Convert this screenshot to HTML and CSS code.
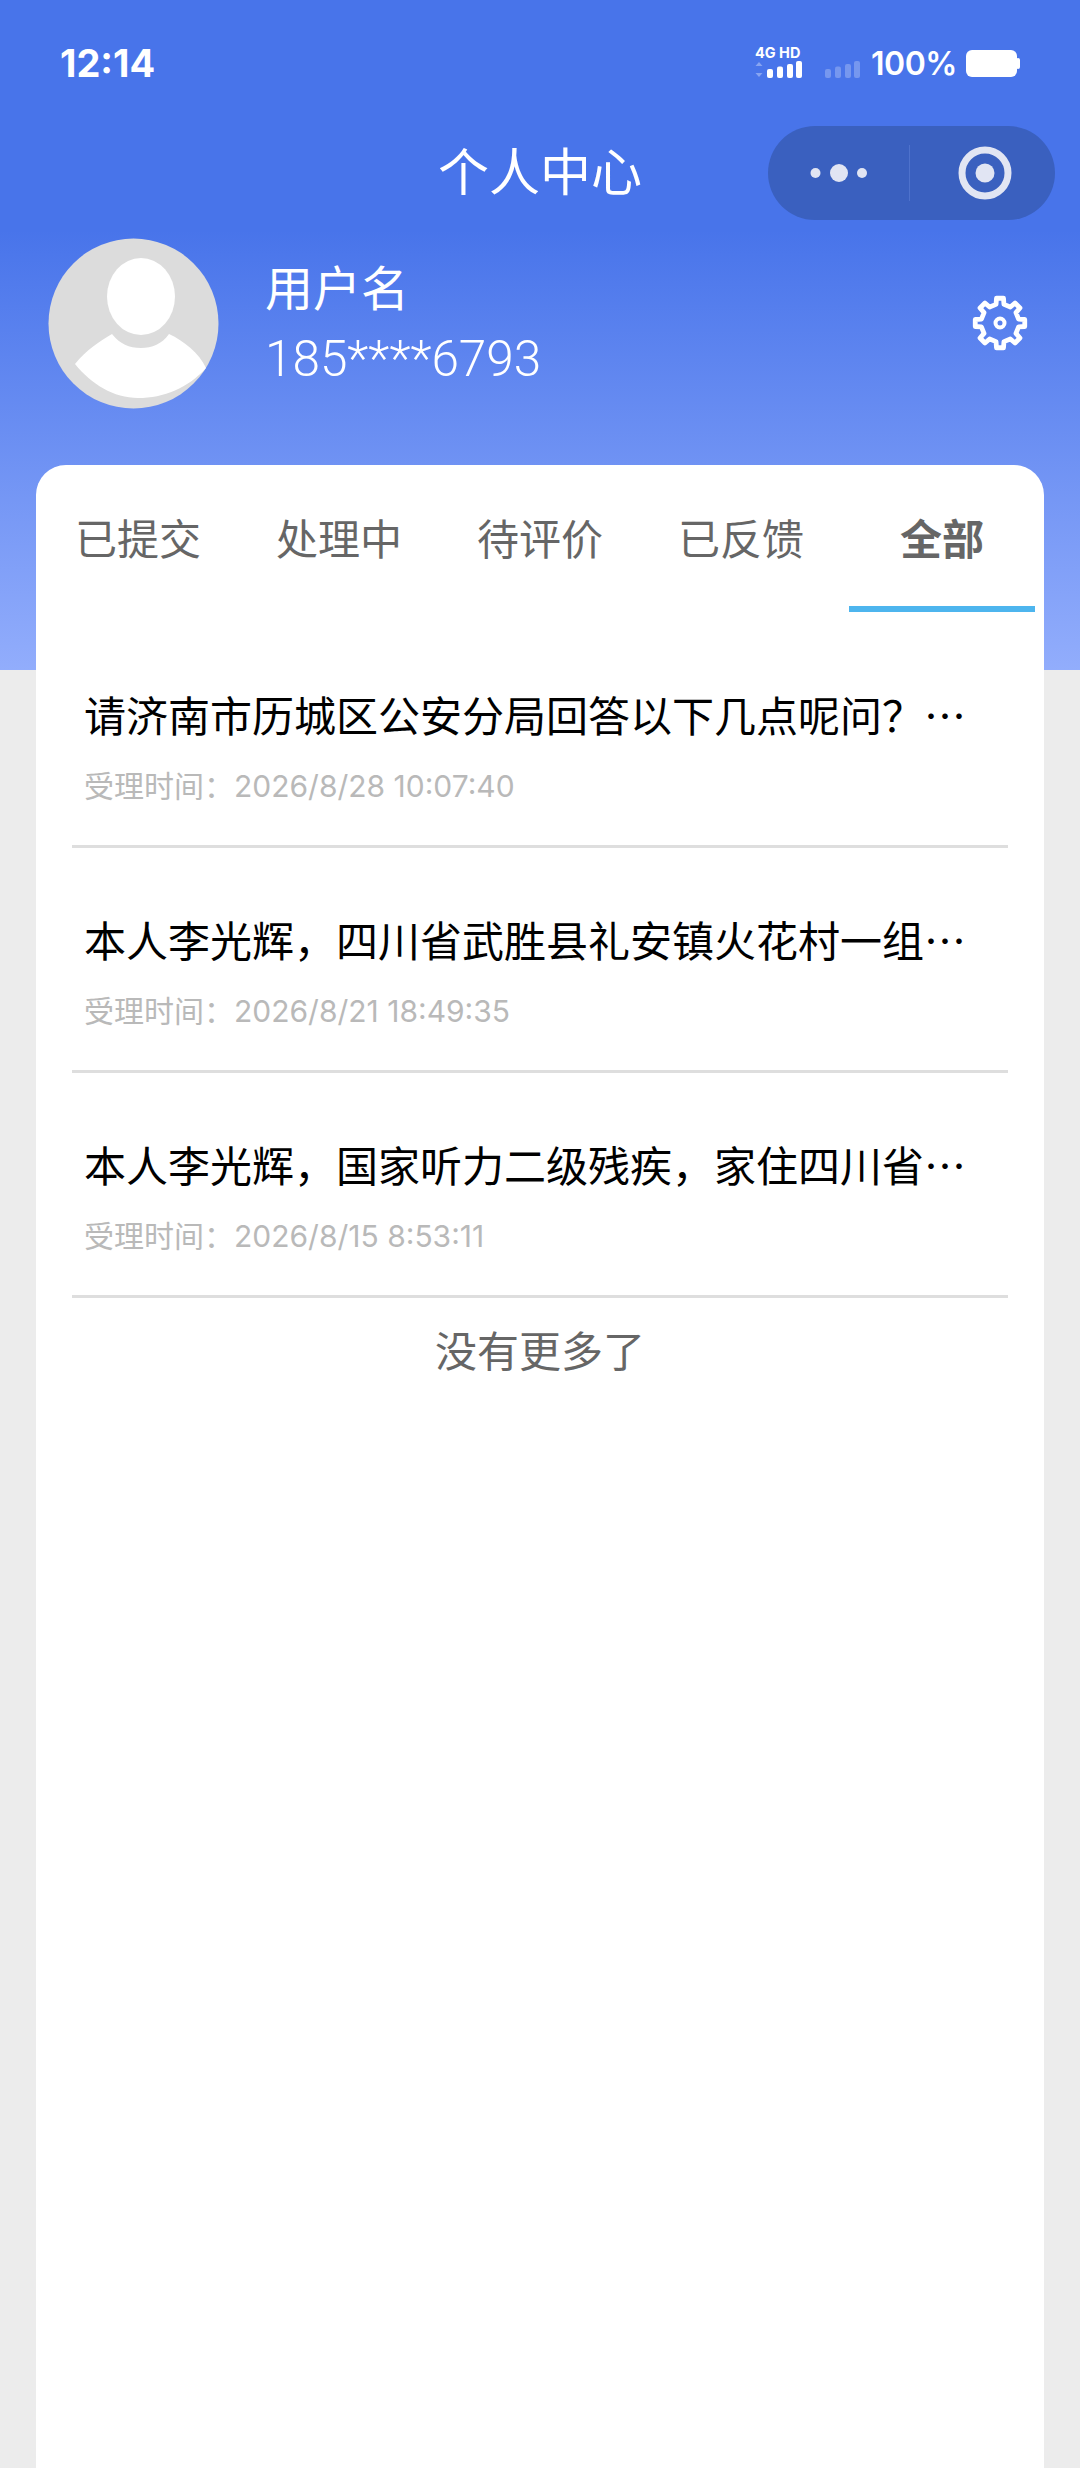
FILE: index.html
```html
<!DOCTYPE html>
<html lang="zh-CN">
<head>
    <meta charset="UTF-8">
    <meta name="viewport" content="width=device-width, initial-scale=1.0">
    <title>个人中心</title>
    <link rel="stylesheet" href="styles.css">
</head>
<body>
    <header class="hero">
        <div class="status-bar">
            <span class="clock">12:14</span>
            <div class="status-right">
                <div class="net">
                    <span class="net-label">4G HD</span>
                    <svg class="net-bars" viewBox="0 0 48 17" width="48" height="17">
                        <path d="M4 1 L7.500 5 H0.500 Z M4 16 L7.500 12 H0.500 Z" fill="#fff" opacity="0.35"/>
                        <rect x="12" y="8" width="6" height="9" rx="2" fill="#fff"/>
                        <rect x="22" y="5.500" width="6" height="11.500" rx="2" fill="#fff"/>
                        <rect x="32" y="3" width="6" height="14" rx="2" fill="#fff"/>
                        <rect x="41" y="0" width="6" height="17" rx="2" fill="#fff"/>
                    </svg>
                </div>
                <svg class="sim-bars" viewBox="0 0 36 17" width="36" height="17">
                    <rect x="0" y="8" width="6" height="9" rx="2" fill="#fff" opacity="0.25"/>
                    <rect x="10" y="5.500" width="6" height="11.500" rx="2" fill="#fff" opacity="0.25"/>
                    <rect x="20" y="3" width="6" height="14" rx="2" fill="#fff" opacity="0.25"/>
                    <rect x="29" y="0" width="6" height="17" rx="2" fill="#fff" opacity="0.25"/>
                </svg>
                <span class="battery-text">100%</span>
                <svg class="battery" viewBox="0 0 54 27" width="54" height="27">
                    <rect x="0" y="0" width="51" height="27" rx="6" fill="#fff"/>
                    <rect x="50" y="8" width="4" height="11" rx="2" fill="#fff"/>
                </svg>
            </div>
        </div>

        <div class="nav-bar">
            <span></span>
            <h1 class="nav-title">个人中心</h1>
            <div class="capsule">
                <div class="capsule-part">
                    <svg viewBox="0 0 58 20" width="58" height="20">
                        <circle cx="5.500" cy="10" r="5" fill="#e1e5f3"/>
                        <circle cx="29" cy="10" r="9" fill="#e1e5f3"/>
                        <circle cx="52" cy="10" r="5" fill="#e1e5f3"/>
                    </svg>
                </div>
                <div class="capsule-line"></div>
                <div class="capsule-part capsule-target">
                    <svg viewBox="0 0 54 54" width="54" height="54">
                        <circle cx="27" cy="27" r="23" fill="none" stroke="#e1e5f3" stroke-width="7"/>
                        <circle cx="27" cy="27" r="9.500" fill="#e1e5f3"/>
                    </svg>
                </div>
            </div>
        </div>

        <div class="user-row">
            <svg class="avatar" viewBox="0 0 171 171" width="171" height="171">
                <circle cx="85.500" cy="85.500" r="85" fill="#dcdcdc"/>
                <ellipse cx="93" cy="58.500" rx="34" ry="38.500" fill="#fff"/>
                <path d="M27 126 C38 112 52 103 64 96 C72 106 81 110 93 110 C104 110 114 106 121 96 C136 103 151 115 158 130 C140 150 116 160 90 160 C66 160 43 146 27 126 Z" fill="#fff"/>
            </svg>
            <div class="user-info">
                <div class="user-name">用户名</div>
                <div class="user-phone">185****6793</div>
            </div>
            <svg class="gear" viewBox="-30 -30 60 60" width="60" height="60">
                <polygon fill="none" stroke="#fff" stroke-width="4.800" stroke-linejoin="round" points="-3.950,-18.600 -3.500,-24.750 3.500,-24.750 3.950,-18.600 10.360,-15.950 15.030,-19.980 19.980,-15.030 15.950,-10.360 18.600,-3.950 24.750,-3.500 24.750,3.500 18.600,3.950 15.950,10.360 19.980,15.030 15.030,19.980 10.360,15.950 3.950,18.600 3.500,24.750 -3.500,24.750 -3.950,18.600 -10.360,15.950 -15.030,19.980 -19.980,15.030 -15.950,10.360 -18.600,3.950 -24.750,3.500 -24.750,-3.500 -18.600,-3.950 -15.950,-10.360 -19.980,-15.030 -15.030,-19.980 -10.360,-15.950"/>
                <circle cx="0" cy="0" r="4.500" fill="none" stroke="#fff" stroke-width="4"/>
            </svg>
        </div>
    </header>

    <main class="card">
        <div class="tabs">
            <div class="tab">已提交</div>
            <div class="tab">处理中</div>
            <div class="tab">待评价</div>
            <div class="tab">已反馈</div>
            <div class="tab active">全部</div>
        </div>

        <div class="list">
            <div class="item">
                <div class="item-title">请济南市历城区公安分局回答以下几点呢问？…</div>
                <div class="item-time">受理时间：2026/8/28 10:07:40</div>
            </div>
            <div class="item">
                <div class="item-title">本人李光辉，四川省武胜县礼安镇火花村一组…</div>
                <div class="item-time">受理时间：2026/8/21 18:49:35</div>
            </div>
            <div class="item">
                <div class="item-title">本人李光辉，国家听力二级残疾，家住四川省…</div>
                <div class="item-time">受理时间：2026/8/15 8:53:11</div>
            </div>
        </div>
        <div class="no-more">没有更多了</div>
    </main>
</body>
</html>
```

FILE: styles.css
```css
* {
    box-sizing: border-box;
}
html, body {
    height: 2468px;
    overflow: hidden;
}
body {
    margin: 0;
    background-color: #ececec;
    font-family: "Inter", "Noto Sans CJK SC", sans-serif;
    color: #000;
}
.hero {
    height: 670px;
    background: linear-gradient(180deg, #4874ea 0, #4874ea 230px, #92adfc 670px);
    color: #fff;
}

/* status bar */
.status-bar {
    height: 126px;
    padding: 0 60px;
    display: flex;
    align-items: center;
    justify-content: space-between;
}
.clock {
    font-size: 38px;
    font-weight: 700;
}
.status-right {
    display: flex;
    align-items: center;
}
.net {
    display: flex;
    flex-direction: column;
    margin-right: 22px;
    margin-top: -4px;
}
.net-label {
    font-size: 14.500px;
    line-height: 16px;
    font-weight: 700;
    white-space: nowrap;
}
.net-bars {
    display: block;
}
.sim-bars {
    margin-top: 13px;
    margin-right: 10px;
}
.battery-text {
    width: 95px;
    font-size: 32px;
    font-weight: 600;
    letter-spacing: -0.500px;
}
.battery {
    display: block;
}

/* nav */
.nav-bar {
    height: 94px;
    display: grid;
    grid-template-columns: 1fr auto 1fr;
    align-items: center;
}
.nav-title {
    margin: 0;
    font-size: 51px;
    font-weight: 400;
    line-height: 94px;
}
.capsule {
    justify-self: end;
    margin-right: 25px;
    width: 287px;
    height: 94px;
    border-radius: 47px;
    background-color: #3a60bf;
    display: flex;
    align-items: center;
}
.capsule-part {
    flex: 1;
    display: flex;
    justify-content: center;
    align-items: center;
}
.capsule-target {
    padding-left: 4px;
}
.capsule-line {
    width: 1px;
    height: 56px;
    background-color: #4e72cc;
}

/* user */
.user-row {
    margin-top: 18px;
    padding: 0 50px 0 48px;
    display: flex;
    align-items: center;
}
.avatar {
    display: block;
    flex-shrink: 0;
}
.user-info {
    flex: 1;
    margin-left: 46px;
}
.user-name {
    font-size: 48px;
    line-height: 70px;
}
.user-phone {
    font-size: 49.500px;
    font-weight: 300;
    line-height: 70px;
    font-family: "Roboto", "Noto Sans CJK SC", sans-serif;
}
.gear {
    display: block;
    margin-bottom: 2px;
}

/* card */
.card {
    margin: -205px 36px 0;
    height: 2003px;
    background-color: #fff;
    border-radius: 30px 30px 0 0;
}
.tabs {
    padding: 0 9px;
    display: grid;
    grid-template-columns: repeat(5, 186px);
    column-gap: 15px;
}
.tab {
    height: 147px;
    padding-top: 45px;
    border-bottom: 6px solid transparent;
    font-size: 42px;
    line-height: 60px;
    text-align: center;
    color: #666;
}
.tab.active {
    font-weight: 700;
    border-bottom-color: #4db5ee;
}
.list {
    margin: 11px 36px 0;
}
.item {
    height: 225px;
    padding: 61px 0 0 12px;
    border-bottom: 3px solid #dedede;
}
.item-title {
    font-family: "Noto Sans CJK SC", sans-serif;
    font-size: 42px;
    line-height: 60px;
    white-space: nowrap;
}
.item-time {
    margin-top: 20px;
    font-size: 30px;
    line-height: 44px;
    color: #b9b9b9;
}
.no-more {
    margin-top: 24px;
    font-size: 42px;
    line-height: 60px;
    text-align: center;
    color: #666;
}
```
